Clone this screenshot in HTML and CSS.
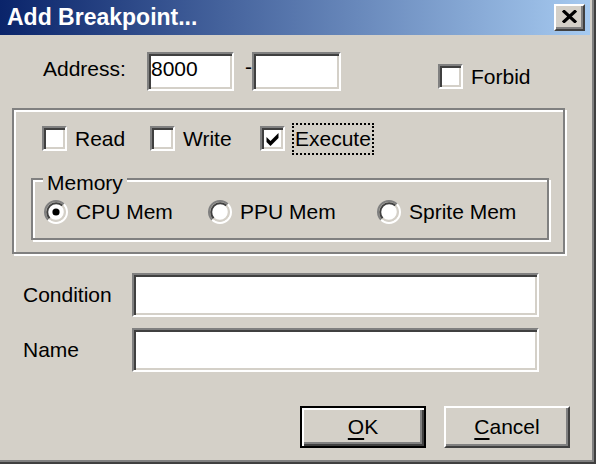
FILE: index.html
```html
<!DOCTYPE html>
<html>
<head>
<meta charset="utf-8">
<title>Add Breakpoint</title>
<link rel="stylesheet" href="styles.css">
</head>
<body>
<div class="window">
  <div class="titlebar">
    <span class="title">Add Breakpoint...</span>
    <button class="close" aria-label="Close">
      <svg width="15" height="13" viewBox="0 0 15 13"><path d="M1 0.5 L14 12.5 M14 0.5 L1 12.5" stroke="#000" stroke-width="3.2" fill="none"/></svg>
    </button>
  </div>
  <div class="content">
    <div class="addr-row">
      <span class="addr-label">Address:</span>
      <div class="field addr1">8000</div>
      <span class="dash">-</span>
      <div class="field addr2"></div>
      <div class="check forbid"><span class="box"></span><span>Forbid</span></div>
    </div>

    <div class="group outer">
      <div class="check-row">
        <div class="check item1"><span class="box"></span><span>Read</span></div>
        <div class="check item2"><span class="box"></span><span>Write</span></div>
        <div class="check item3"><span class="box"><svg width="17" height="17" viewBox="0 0 17 17"><path d="M2.5 7 L6.5 11 L14.5 3 L14.5 8 L6.5 16 L2.5 12 Z" fill="#000"/></svg></span><span class="focus">Execute</span></div>
      </div>
      <div class="group memory">
        <span class="legend">Memory</span>
        <div class="radio-row">
          <div class="radio ritem1">
            <svg width="24" height="24" viewBox="0 0 24 24">
              <circle cx="12" cy="12" r="9" fill="#fff"/>
              <path d="M4.22 19.78 A11 11 0 0 1 19.78 4.22" stroke="#808080" stroke-width="2" fill="none"/>
              <path d="M19.78 4.22 A11 11 0 0 1 4.22 19.78" stroke="#fff" stroke-width="2" fill="none"/>
              <path d="M5.64 18.36 A9 9 0 0 1 18.36 5.64" stroke="#404040" stroke-width="2" fill="none"/>
              <path d="M18.36 5.64 A9 9 0 0 1 5.64 18.36" stroke="#d4d0c8" stroke-width="2" fill="none"/>
              <circle cx="12" cy="12" r="3.6" fill="#000"/>
            </svg>
            <span>CPU Mem</span>
          </div>
          <div class="radio ritem2">
            <svg width="24" height="24" viewBox="0 0 24 24">
              <circle cx="12" cy="12" r="9" fill="#fff"/>
              <path d="M4.22 19.78 A11 11 0 0 1 19.78 4.22" stroke="#808080" stroke-width="2" fill="none"/>
              <path d="M19.78 4.22 A11 11 0 0 1 4.22 19.78" stroke="#fff" stroke-width="2" fill="none"/>
              <path d="M5.64 18.36 A9 9 0 0 1 18.36 5.64" stroke="#404040" stroke-width="2" fill="none"/>
              <path d="M18.36 5.64 A9 9 0 0 1 5.64 18.36" stroke="#d4d0c8" stroke-width="2" fill="none"/>
            </svg>
            <span>PPU Mem</span>
          </div>
          <div class="radio ritem3">
            <svg width="24" height="24" viewBox="0 0 24 24">
              <circle cx="12" cy="12" r="9" fill="#fff"/>
              <path d="M4.22 19.78 A11 11 0 0 1 19.78 4.22" stroke="#808080" stroke-width="2" fill="none"/>
              <path d="M19.78 4.22 A11 11 0 0 1 4.22 19.78" stroke="#fff" stroke-width="2" fill="none"/>
              <path d="M5.64 18.36 A9 9 0 0 1 18.36 5.64" stroke="#404040" stroke-width="2" fill="none"/>
              <path d="M18.36 5.64 A9 9 0 0 1 5.64 18.36" stroke="#d4d0c8" stroke-width="2" fill="none"/>
            </svg>
            <span>Sprite Mem</span>
          </div>
        </div>
      </div>
    </div>

    <div class="form-row cond-row">
      <span class="form-label">Condition</span>
      <div class="field wide"></div>
    </div>
    <div class="form-row name-row">
      <span class="form-label">Name</span>
      <div class="field wide"></div>
    </div>

    <div class="btn-row">
      <button class="btn default"><u>O</u>K</button>
      <button class="btn"><u>C</u>ancel</button>
    </div>
  </div>
</div>
</body>
</html>
```
FILE: styles.css
```css
html, body {
  margin: 0;
  padding: 0;
  background: #d4d0c8;
}

body {
  font-family: "Liberation Sans", Arial, sans-serif;
  font-size: 21px;
  color: #000;
}

.window {
  width: 596px;
  height: 464px;
  box-sizing: border-box;
  background: #d4d0c8;
  box-shadow: inset -2px -2px 0 #404040, inset -4px -4px 0 #808080;
  display: flex;
  flex-direction: column;
  overflow: hidden;
}

.titlebar {
  width: 590px;
  height: 35px;
  flex: none;
  box-sizing: border-box;
  padding-left: 7px;
  background: linear-gradient(to right, #0a246a, #a6caf0);
  display: flex;
  align-items: center;
}

.title {
  color: #fff;
  font-weight: bold;
  font-size: 23px;
  white-space: nowrap;
}

.close {
  margin-left: auto;
  margin-right: 5px;
  width: 31px;
  height: 27px;
  box-sizing: border-box;
  padding: 0 0 2px 0;
  background: #d4d0c8;
  border: 2px solid;
  border-color: #fff #404040 #404040 #fff;
  box-shadow: inset -2px -2px 0 #808080;
  display: flex;
  align-items: center;
  justify-content: center;
}

.close svg {
  display: block;
}

.content {
  padding-top: 17px;
}

/* sunken field look */
.field,
.box {
  box-sizing: border-box;
  background: #fff;
  border: 2px solid;
  border-color: #808080 #fff #fff #808080;
  box-shadow: inset 2px 2px 0 #404040, inset -2px -2px 0 #d4d0c8;
}

.field {
  height: 39px;
  padding: 2px 0 0 2px;
  line-height: 26px;
}

.addr-row {
  display: flex;
  align-items: flex-start;
  padding-left: 43px;
}

.addr-label {
  width: 104px;
  line-height: 33px;
}

.addr1 {
  width: 87px;
}

.addr2 {
  width: 89px;
}

.dash {
  width: 18px;
  box-sizing: border-box;
  padding-left: 11px;
  line-height: 29px;
}

.check {
  display: flex;
  align-items: center;
  gap: 8px;
  flex: none;
}

.box {
  width: 25px;
  height: 25px;
  flex: none;
  display: flex;
  align-items: center;
  justify-content: center;
}

.box svg {
  display: block;
}

.forbid {
  margin-left: 97px;
  margin-top: 12px;
}

/* etched group boxes */
.group {
  box-sizing: border-box;
  border: 2px solid #808080;
  box-shadow: inset 2px 2px 0 #fff, 2px 2px 0 #fff;
}

.outer {
  margin: 17px 0 0 12px;
  width: 553px;
  height: 146px;
  padding-top: 16px;
}

.check-row {
  display: flex;
  align-items: center;
  height: 25px;
  padding-left: 28px;
}

.item1 {
  width: 108px;
}

.item2 {
  width: 110px;
}

.item3 {
  gap: 7px;
}

.focus {
  border: 2px dotted #000;
  padding: 0 1px;
  line-height: 28px;
}

.memory {
  position: relative;
  margin: 27px 0 0 17px;
  width: 518px;
  height: 62px;
  padding: 20px 0 0 11px;
}

.legend {
  position: absolute;
  top: -9px;
  left: 10px;
  padding: 0 4px;
  background: #d4d0c8;
  line-height: 24px;
}

.radio-row {
  display: flex;
  align-items: center;
}

.radio {
  display: flex;
  align-items: center;
  gap: 8px;
  flex: none;
}

.radio svg {
  display: block;
  flex: none;
}

.ritem1 {
  width: 164px;
}

.ritem2 {
  width: 169px;
}

.form-row {
  display: flex;
  align-items: center;
  padding-left: 23px;
}

.form-label {
  width: 109px;
}

.wide {
  width: 407px;
  height: 44px;
}

.cond-row {
  margin-top: 19px;
}

.name-row {
  margin-top: 11px;
}

.btn-row {
  display: flex;
  justify-content: flex-end;
  gap: 18px;
  padding-right: 26px;
  margin-top: 34px;
}

.btn {
  width: 126px;
  height: 42px;
  box-sizing: border-box;
  margin: 0;
  padding: 0;
  font: inherit;
  color: #000;
  background: #d4d0c8;
  border: 2px solid;
  border-color: #fff #404040 #404040 #fff;
  box-shadow: inset -2px -2px 0 #808080;
}

.btn.default {
  border: 2px solid #000;
  box-shadow: inset 2px 2px 0 #fff, inset -2px -2px 0 #404040, inset -4px -4px 0 #808080;
}

.btn u {
  text-decoration-thickness: 2px;
  text-underline-offset: 4px;
}
```
